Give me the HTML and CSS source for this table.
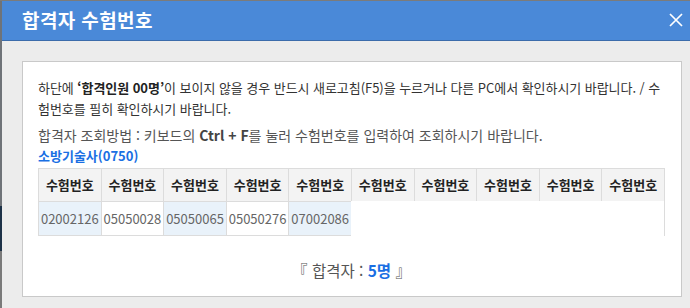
FILE: index.html
```html
<!DOCTYPE html>
<html lang="ko">
<head>
<meta charset="utf-8">
<title>합격자 수험번호</title>
<link rel="stylesheet" href="styles.css">
</head>
<body>
<div class="frame">
  <div class="edge"></div>
  <div class="window">
    <header class="titlebar">
      <h1 class="title">합격자 수험번호</h1>
      <button class="close" aria-label="닫기">
        <svg width="14" height="14" viewBox="0 0 14 14"><path d="M1 1L13 13M13 1L1 13" stroke="#fff" stroke-width="1.7" fill="none"/></svg>
      </button>
    </header>
    <div class="content">
      <div class="panel">
        <p class="notice">하단에 <b>‘합격인원 00명’</b>이 보이지 않을 경우 반드시 새로고침(F5)을 누르거나 다른 PC에서 확인하시기 바랍니다. / 수<br>험번호를 필히 확인하시기 바랍니다.</p>
        <p class="howto">합격자 조회방법 : 키보드의 <b>Ctrl + F</b>를 눌러 수험번호를 입력하여 조회하시기 바랍니다.</p>
        <p class="category">소방기술사(0750)</p>
        <div class="grid">
          <div class="th">수험번호</div>
          <div class="th">수험번호</div>
          <div class="th">수험번호</div>
          <div class="th">수험번호</div>
          <div class="th">수험번호</div>
          <div class="th">수험번호</div>
          <div class="th">수험번호</div>
          <div class="th">수험번호</div>
          <div class="th">수험번호</div>
          <div class="th">수험번호</div>
          <div class="td odd">02002126</div>
          <div class="td">05050028</div>
          <div class="td odd">05050065</div>
          <div class="td">05050276</div>
          <div class="td odd">07002086</div>
        </div>
        <p class="total">『 합격자 : <b>5명</b> 』</p>
      </div>
    </div>
  </div>
</div>
</body>
</html>
```
FILE: styles.css
```css
* { box-sizing: border-box; }
html, body {
  margin: 0;
  padding: 0;
  width: 690px;
  height: 308px;
  overflow: hidden;
  background: #ececec;
  font-family: "Noto Sans CJK KR", "Noto Sans", sans-serif;
}
.frame {
  display: flex;
  height: 308px;
  border-top: 1px solid #7b7b7b;
}
.edge {
  width: 2px;
  flex: none;
  background: linear-gradient(#6f7378 0, #6f7378 205px, #1d3248 205px, #1d3248 250px, #7a7a7a 250px);
}
.window {
  flex: 1;
  display: flex;
  flex-direction: column;
  background: #ececec;
}
.titlebar {
  height: 40px;
  background: #4a89d8;
  border-bottom: 1px solid #3b6cab;
  display: flex;
  align-items: center;
  justify-content: space-between;
  padding: 0 7px 0 20px;
}
.title {
  margin: 0;
  color: #fff;
  font-size: 19px;
  font-weight: bold;
  letter-spacing: 0.4px;
  line-height: 1;
  padding-bottom: 2px;
}
.close {
  border: 0;
  background: none;
  padding: 0;
  width: 14px;
  height: 14px;
  display: flex;
  margin-bottom: 1px;
}
.content {
  padding: 20px 8px 0 20px;
}
.panel {
  background: #fff;
  border: 1px solid #c9c9c9;
  height: 236px;
  padding: 15px 16px 0 15px;
}
.panel p { margin: 0; }
.notice {
  font-size: 13px;
  line-height: 21px;
  color: #333;
  letter-spacing: -0.05px;
}
.notice b { font-weight: bold; color: #222; }
.howto {
  margin-top: 6px !important;
  font-size: 14px;
  line-height: 20px;
  color: #555;
}
.howto b { color: #444; }
.category {
  margin-top: 1px !important;
  margin-bottom: 3px !important;
  font-size: 13px;
  line-height: 19px;
  font-weight: bold;
  color: #1a6fe3;
}
.grid {
  display: grid;
  grid-template-columns: repeat(10, 1fr);
  border-right: 1px solid #dcdcdc;
}
.th, .td {
  border-left: 1px solid #dcdcdc;
  border-top: 1px solid #dcdcdc;
  text-align: center;
  font-size: 13px;
  white-space: nowrap;
}
.th {
  height: 33px;
  line-height: 32px;
  background: #f3f3f3;
  color: #222;
  font-weight: bold;
}
.td {
  height: 35px;
  line-height: 33px;
  color: #666;
  background: #fff;
  border-bottom: 1px solid #dcdcdc;
}
.td.odd { background: #e9f2fa; }
.total {
  text-align: center;
  margin-top: 23px !important;
  font-size: 15.5px;
  line-height: 22px;
  color: #555;
}
.total b { color: #1a6fe3; }
```
